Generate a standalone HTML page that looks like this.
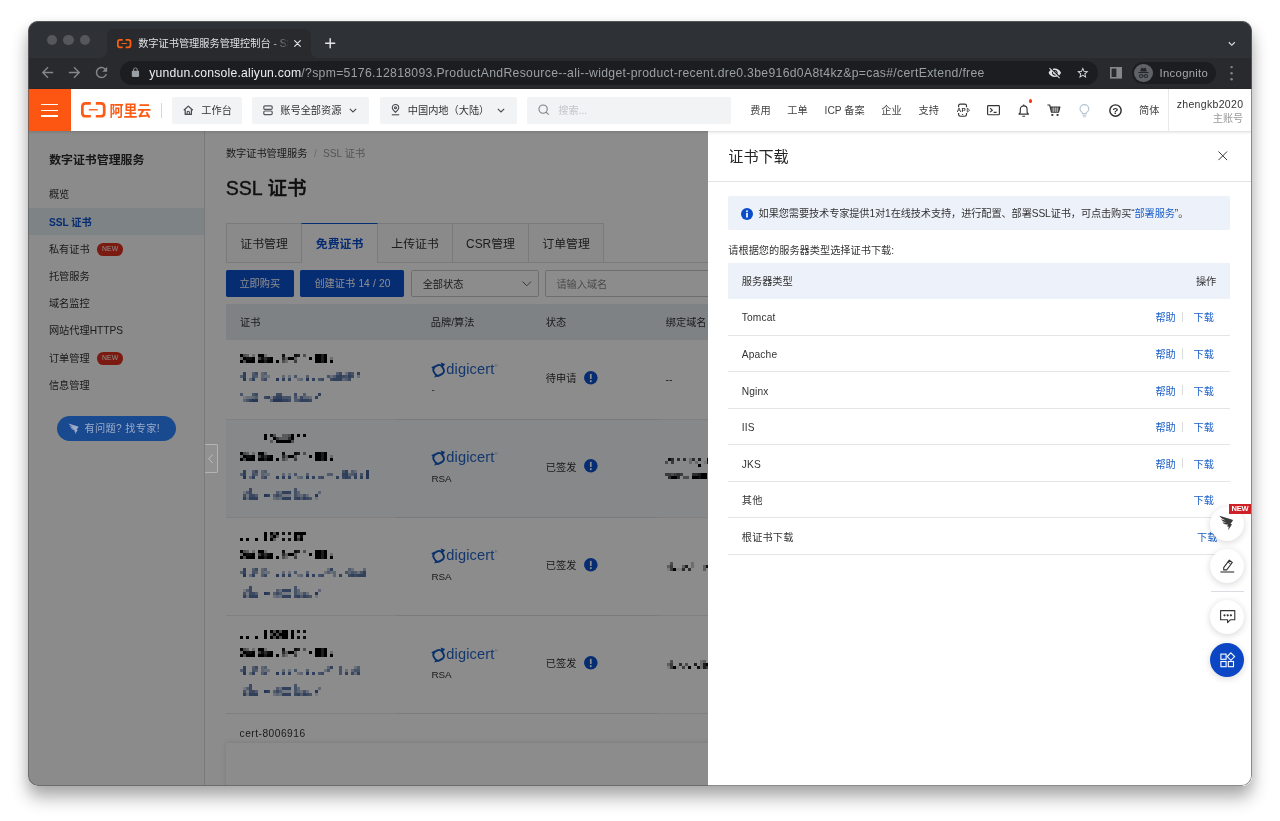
<!DOCTYPE html>
<html lang="zh-CN">
<head>
<meta charset="utf-8">
<title>数字证书管理服务管理控制台 - SSL 证书</title>
<style>
*{box-sizing:border-box;margin:0;padding:0}
html,body{width:1280px;height:821px;overflow:hidden;background:#fff}
body{font-family:"Liberation Sans","Noto Sans CJK SC",sans-serif;font-size:10.2px;color:#333;position:relative;-webkit-font-smoothing:antialiased}
.a{position:absolute}
.t{position:absolute;white-space:nowrap;line-height:14px;height:14px;margin-top:1.2px}
#url,#user,#dtitle,#inc{margin-top:0}#h1{margin-top:.5px}#info{margin-top:.6px}#ttl{margin-top:.8px}
svg{position:absolute;overflow:visible}
#win{position:absolute;left:28.4px;top:21px;width:1223.6px;height:764.6px;border-radius:10px;overflow:hidden;background:transparent;will-change:transform}
#shadow{position:absolute;left:28.4px;top:21px;width:1223.6px;height:764.6px;border-radius:10px;box-shadow:0 12px 17px rgba(0,0,0,.30),0 3px 12px rgba(0,0,0,.09)}
#ring{position:absolute;left:0;top:0;width:100%;height:100%;border-radius:10px;box-shadow:inset 0 0 0 1px rgba(98,98,98,.74);z-index:20;pointer-events:none}
/* chrome */
#tabstrip{left:0;top:0;width:100%;height:36.8px;background:#2e3135}
#toolbar{left:0;top:36.8px;width:100%;height:30.8px;background:#292a2e}
.tl{position:absolute;top:14.1px;width:10.3px;height:10.3px;border-radius:50%;background:#55575b}
#tab{left:79.3px;top:8.1px;width:203.5px;height:28.8px;background:#292a2e;border-radius:7px 7px 0 0}
#tab:before,#tab:after{content:"";position:absolute;bottom:0;width:7px;height:7px;background:radial-gradient(circle at 0 0,rgba(0,0,0,0) 6.6px,#292a2e 7px)}
#tab:before{left:-7px}
#tab:after{right:-7px;background:radial-gradient(circle at 100% 0,rgba(0,0,0,0) 6.6px,#292a2e 7px)}
#omni{left:92.1px;top:39.8px;width:977.8px;height:24.5px;border-radius:12.3px;background:#1c1d20}
#incog{left:1104.4px;top:40.5px;width:83.6px;height:22.6px;border-radius:11.3px;background:#1c1d20}
/* aliyun header */
#hdr{left:0;top:67.6px;width:100%;height:42.5px;background:#fff;box-shadow:0 1px 3px rgba(0,0,0,.16);z-index:5}
.hb{position:absolute;top:8.2px;height:27px;background:#f1f3f5;border-radius:1.7px}
.nav{position:absolute;top:15.5px;line-height:14px;white-space:nowrap;color:#444}
/* page */
#page{left:0;top:110.1px;width:100%;height:654.5px;background:#fff}
#side{left:0;top:0;width:177.2px;height:100%;background:#fdfdfd;border-right:.85px solid #dcdcdc}
.si{position:absolute;left:0;width:176.4px;height:27.2px;line-height:27.2px;padding-top:.9px;padding-left:20.9px;color:#333;white-space:nowrap}
.new{display:inline-block;vertical-align:1.4px;margin-left:7.2px;width:26.6px;height:12.6px;line-height:12.6px;border-radius:6.3px;background:#e0301e;color:#fff;font-size:6.8px;text-align:center;letter-spacing:.2px}
#overlay{left:0;top:0;width:679.8px;height:100%;background:rgba(0,0,0,.45);z-index:3}
#drawer{left:679.8px;top:0;width:543.8px;height:100%;background:#fff;z-index:4}
.lnk{color:#1a5fc8}
.btn{top:138.6px;height:27.2px;line-height:28.6px;background:#0b50d0;color:#fff;text-align:center;border-radius:1.7px;white-space:nowrap}
.inp{top:138.6px;height:27.2px;line-height:27.2px;border:.85px solid #c6c8cc;border-radius:1.7px;background:#fff;padding-left:10.4px;white-space:nowrap}
</style>
</head>
<body>
<div id="shadow"></div>
<div id="win">
<div class="a" id="tabstrip">
  <div class="tl" style="left:18.5px"></div><div class="tl" style="left:35.3px"></div><div class="tl" style="left:52.1px"></div>
  <div class="a" id="tab">
    <svg style="left:10.2px;top:9.700px" width="14.400" height="9.200" viewBox="0 0 24.600 15.600" fill="none" stroke="#f8600f"><path d="M9.800 1.500H4.900Q1.500 1.500 1.500 4.900V10.700Q1.500 14.100 4.900 14.100H9.800M14.800 1.500H19.700Q23.100 1.500 23.100 4.900V10.700Q23.100 14.100 19.700 14.100H14.800" stroke-width="3"/><path d="M7.800 7.800H16.800" stroke-width="1.800"/></svg>
    <div class="t" id="ttl" style="left:30.9px;top:7.2px;width:150px;overflow:hidden;color:#dfe1e5;-webkit-mask-image:linear-gradient(90deg,#000 132px,rgba(0,0,0,.15) 149px);mask-image:linear-gradient(90deg,#000 132px,rgba(0,0,0,.15) 149px)">数字证书管理服务管理控制台 - SSL 证书</div>
    <svg style="left:187.2px;top:10.7px" width="7" height="7" viewBox="0 0 10 10" stroke="#e3e5e8" stroke-width="1.7" stroke-linecap="round"><path d="M1 1L9 9M9 1L1 9"/></svg>
  </div>
  <svg style="left:296.5px;top:17px" width="10.4" height="10.4" viewBox="0 0 12 12" stroke="#e3e5e8" stroke-width="1.7" stroke-linecap="round"><path d="M6 .8V11.2M.8 6H11.2"/></svg>
  <svg style="left:1196.8px;top:15.7px" width="13.6" height="13.6" viewBox="0 0 24 24" fill="#dfe1e5"><path d="M7.41 8.59L12 13.17l4.59-4.58L18 10l-6 6-6-6 1.41-1.41z"/></svg>
</div>
<div class="a" id="toolbar">
  <svg style="left:10.5px;top:6.7px" width="17" height="17" viewBox="0 0 24 24" fill="#84878c"><path d="M20 11H7.83l5.59-5.59L12 4l-8 8 8 8 1.41-1.41L7.83 13H20v-2z"/></svg>
  <svg style="left:38px;top:6.7px" width="17" height="17" viewBox="0 0 24 24" fill="#84878c"><path d="M12 4l-1.41 1.41L16.17 11H4v2h12.17l-5.58 5.59L12 20l8-8z"/></svg>
  <svg style="left:65.1px;top:6.7px" width="17" height="17" viewBox="0 0 24 24" fill="#84878c"><path d="M17.65 6.35A7.958 7.958 0 0 0 12 4c-4.42 0-7.99 3.58-7.99 8s3.57 8 7.99 8c3.73 0 6.84-2.55 7.73-6h-2.08A5.99 5.99 0 0 1 12 18c-3.31 0-6-2.69-6-6s2.69-6 6-6c1.66 0 3.14.69 4.22 1.78L13 11h7V4l-2.35 2.350z"/></svg>
</div>
<div class="a" id="omni">
  <svg style="left:9.5px;top:6.4px" width="10.9" height="10.9" viewBox="0 0 24 24" fill="#9aa0a6"><path d="M18 8h-1V6c0-2.76-2.240-5-5-5S7 3.240 7 6v2H6c-1.100 0-2 .9-2 2v10c0 1.100.9 2 2 2h12c1.100 0 2-.9 2-2V10c0-1.100-.9-2-2-2zM9 6c0-1.660 1.340-3 3-3s3 1.340 3 3v2H9V6z"/></svg>
  <div class="t" id="url" style="left:29.2px;top:4.9px;font-size:12.2px;letter-spacing:.334px;color:#9aa0a6"><span style="color:#eceef1;letter-spacing:.2px">yundun.console.aliyun.com</span>/?spm=5176.12818093.ProductAndResource--ali--widget-product-recent.dre0.3be916d0A8t4kz&amp;p=cas#/certExtend/free</div>
  <svg style="left:928.2px;top:5.4px" width="13.6" height="13.6" viewBox="0 0 24 24" fill="#dfe1e5"><path d="M12 7c2.760 0 5 2.240 5 5 0 .650-.130 1.260-.360 1.830l2.920 2.920c1.510-1.260 2.700-2.890 3.430-4.750-1.730-4.390-6-7.500-11-7.500-1.400 0-2.740.250-3.980.7l2.160 2.160C10.740 7.130 11.350 7 12 7zM2 4.270l2.280 2.280.46.460C3.080 8.300 1.780 10.020 1 12c1.730 4.390 6 7.500 11 7.500 1.550 0 3.030-.3 4.380-.840l.42.420L19.730 22 21 20.730 3.270 3 2 4.270zM7.530 9.800l1.550 1.550c-.050.210-.080.430-.080.650 0 1.660 1.340 3 3 3 .220 0 .440-.030.650-.080l1.550 1.550c-.670.330-1.410.530-2.200.530-2.760 0-5-2.240-5-5 0-.790.200-1.530.530-2.200zm4.310-.780l3.150 3.150.020-.160c0-1.660-1.340-3-3-3l-.170.010z"/></svg>
  <svg style="left:955.5px;top:5.4px" width="13.6" height="13.6" viewBox="0 0 24 24" fill="#dfe1e5"><path d="M22 9.240l-7.190-.620L12 2 9.190 8.630 2 9.240l5.460 4.730L5.820 21 12 17.270 18.180 21l-1.630-7.030L22 9.240zM12 15.400l-3.760 2.270 1-4.280-3.320-2.880 4.380-.380L12 6.100l1.710 4.040 4.380.380-3.320 2.880 1 4.280L12 15.400z"/></svg>
</div>
<svg style="left:1082.1px;top:46.300px" width="12" height="11.6" viewBox="0 0 12 11.6"><rect x=".8" y=".8" width="10.4" height="10" fill="none" stroke="#84878c" stroke-width="1.6"/><rect x="6.400" y=".8" width="4.800" height="10" fill="#84878c"/></svg>
<div class="a" id="incog">
  <div class="a" style="left:2px;top:2px;width:18.600px;height:18.600px;border-radius:50%;background:#5f6368"></div>
  <svg style="left:4.800px;top:5.200px" width="13" height="12" viewBox="0 0 26 24" fill="#24262a"><path d="M8.200 2.500Q8.700 1 10 1.600L13 3 16 1.600Q17.300 1 17.800 2.500L19.600 9H6.400Z"/><rect x="2.500" y="10.200" width="21" height="1.900" rx=".9"/><path d="M8 14a4 4 0 1 0 0 8 4 4 0 0 0 0-8zm0 1.800a2.200 2.200 0 1 1 0 4.400 2.200 2.200 0 0 1 0-4.400zM18 14a4 4 0 1 0 0 8 4 4 0 0 0 0-8zm0 1.800a2.200 2.200 0 1 1 0 4.400 2.200 2.200 0 0 1 0-4.400z"/><path d="M11.200 17.200Q13 16 14.800 17.200V18.900Q13 17.700 11.200 18.900Z"/></svg>
  <div class="t" id="inc" style="left:27.200px;top:4.300px;font-size:11.3px;letter-spacing:.3px;color:#a3a7ac">Incognito</div>
</div>
<svg style="left:1202.4px;top:43.800px" width="3.200" height="16.400" viewBox="0 0 3.200 16.400" fill="#84878c"><circle cx="1.600" cy="2.100" r="1.200"/><circle cx="1.600" cy="8.200" r="1.200"/><circle cx="1.600" cy="14.300" r="1.200"/></svg>

<div class="a" id="hdr">
  <div class="a" style="left:0;top:0;width:42.7px;height:42.5px;background:#fd5512"></div>
  <div class="a" style="left:13px;top:15px;width:17.2px;height:1.45px;background:#fff"></div>
  <div class="a" style="left:13px;top:20.95px;width:17.2px;height:1.45px;background:#fff"></div>
  <div class="a" style="left:13px;top:26.85px;width:17.2px;height:1.45px;background:#fff"></div>
  <svg style="left:52.7px;top:13.8px" width="24.6" height="15.6" viewBox="0 0 24.600 15.600" fill="none" stroke="#fd5a14"><path d="M9.800 1.350H4.700Q1.350 1.350 1.350 4.700V10.900Q1.350 14.250 4.700 14.250H9.800M14.800 1.350H19.900Q23.250 1.350 23.250 4.700V10.900Q23.250 14.250 19.900 14.250H14.800" stroke-width="2.700"/><path d="M7.800 7.800H16.800" stroke-width="1.350"/></svg>
  <div class="t" id="logo" style="left:81.6px;top:12.4px;height:18px;line-height:18px;font-size:13.9px;font-weight:700;color:#fd5a14;letter-spacing:-.1px;transform:scaleY(1.06)">阿里云</div>
  <div class="a" style="left:133.4px;top:14.2px;width:.9px;height:15px;background:#d4d6d8"></div>

  <div class="hb" style="left:144.1px;width:69.5px"></div>
  <svg style="left:155.3px;top:16.1px" width="10.6" height="10.6" viewBox="0 0 12 12" fill="none" stroke="#4a4d50" stroke-width="1.45" stroke-linejoin="round"><path d="M.9 5.900L6 1.300 11.100 5.900"/><path d="M2.500 5V10.700H9.500V5" /><path d="M4.700 10.700V8.200Q4.700 7 6 7T7.300 8.200V10.700" stroke-width="1.200"/></svg>
  <div class="nav" style="left:173.300px;color:#333">工作台</div>

  <div class="hb" style="left:224.1px;width:117px"></div>
  <svg style="left:235.3px;top:16.400px" width="10" height="10.400" viewBox="0 0 10 10.400" fill="none" stroke="#55585c" stroke-width="1.200"><rect x=".8" y=".8" width="8.400" height="3.600" rx="1.200"/><rect x=".8" y="6" width="8.400" height="3.600" rx="1.200"/></svg>
  <div class="nav" style="left:252.300px;color:#333">账号全部资源</div>
  <svg style="left:321.4px;top:19px" width="8" height="5" viewBox="0 0 8 5" fill="none" stroke="#4a4a4a" stroke-width="1.100"><path d="M.8 .8L4 4 7.200 .8"/></svg>

  <div class="hb" style="left:351.6px;width:137px"></div>
  <svg style="left:363.4px;top:15.700px" width="9" height="11.600" viewBox="0 0 9 11.600" fill="none" stroke="#4a4d50" stroke-width="1.100"><path d="M4.500 8.300C2.500 6.400 1.300 5.200 1.300 3.700a3.200 3.200 0 0 1 6.400 0C7.700 5.200 6.500 6.400 4.500 8.300z"/><circle cx="4.500" cy="3.700" r="1"/><path d="M.8 10.800H8.200"/></svg>
  <div class="nav" style="left:379.800px;color:#333">中国内地（大陆）</div>
  <svg style="left:468.9px;top:19px" width="8" height="5" viewBox="0 0 8 5" fill="none" stroke="#4a4a4a" stroke-width="1.100"><path d="M.8 .8L4 4 7.200 .8"/></svg>

  <div class="hb" style="left:499.1px;width:203.8px"></div>
  <svg style="left:509.6px;top:15.800px" width="11.600" height="11.600" viewBox="0 0 12 12" fill="none" stroke="#7d8185" stroke-width="1.150"><circle cx="5.300" cy="5.300" r="4.300"/><path d="M8.400 8.400L11 11"/></svg>
  <div class="nav" style="left:530.300px;color:#c2c5c9">搜索...</div>

  <div class="nav" style="left:722.300px">费用</div>
  <div class="nav" style="left:759.300px">工单</div>
  <div class="nav" style="left:796.600px">ICP 备案</div>
  <div class="nav" style="left:853.300px">企业</div>
  <div class="nav" style="left:890.600px">支持</div>

  <!-- api -->
  <svg style="left:926.6px;top:14.600px" width="15.600" height="14.400" viewBox="0 0 15.600 14.400" fill="none" stroke="#333" stroke-width="1.150"><path d="M3.600 4.300V2.800Q3.600 1.100 5.300 1.100H9.800Q11.500 1.100 11.500 2.800V4.300M3.600 10.100V11.600Q3.600 13.300 5.300 13.300H9.800Q11.500 13.300 11.500 11.600V10.100"/><path d="M6.900 11.600H8.200" stroke-width=".9"/><text x="6.400" y="9.400" font-family="Liberation Sans,sans-serif" font-size="6.200" font-weight="700" text-anchor="middle" fill="#333" stroke="none" letter-spacing=".3">AP</text><path d="M12.300 5.200L14.600 7.200 12.300 9.200Z" stroke-width=".8" stroke-linejoin="round"/></svg>
  <!-- terminal -->
  <svg style="left:958.6px;top:16.200px" width="13" height="10.400" viewBox="0 0 13 10.400" fill="none" stroke="#333" stroke-width="1.150"><rect x=".6" y=".6" width="11.800" height="9.200" rx=".8"/><path d="M3.100 3.200L5.300 5.200 3.100 7.200M6.600 7.400H9.600"/></svg>
  <!-- bell -->
  <svg style="left:989.9px;top:15.200px" width="11.400" height="13.400" viewBox="0 0 11.400 13.400" fill="none" stroke="#333" stroke-width="1.150"><path d="M1 10.200H10.400L9.100 8.400V5.300A3.400 3.400 0 0 0 2.300 5.300V8.400Z" stroke-linejoin="round"/><path d="M5.700 1.900V.6M4.300 12.300H7.100"/></svg>
  <div class="a" style="left:1000.6px;top:10.500px;width:3.500px;height:3.500px;border-radius:50%;background:#f5371e"></div>
  <!-- cart -->
  <svg style="left:1019.2px;top:15.500px" width="13.800" height="12.400" viewBox="0 0 13.800 12.400" fill="none" stroke="#333" stroke-width="1.150"><path d="M3.400 3.200H12.900L11.600 8.100H4.600Z" fill="#6a6a6a" stroke="none"/><path d="M.4 1H2.700L4.500 8.300H11.500L12.900 3.100H3.300" stroke-linejoin="round"/><path d="M6.300 3.400V8M8.300 3.400V8M10.300 3.400V8" stroke="#fff" stroke-width=".55"/><rect x="4.400" y="10" width="1.900" height="1.900" fill="#333" stroke="none"/><rect x="9.600" y="10" width="1.900" height="1.900" fill="#333" stroke="none"/></svg>
  <!-- bulb -->
  <svg style="left:1051.2px;top:15px" width="10.800" height="14" viewBox="0 0 10.800 14" fill="none" stroke="#b6c5d1" stroke-width="1.150"><path d="M3.500 9.700V8.900C2.200 8 1 6.800 1 5a4.400 4.400 0 0 1 8.800 0C9.800 6.800 8.600 8 7.300 8.900V9.700Z" stroke-linejoin="round"/><path d="M3.600 11.300H7.200M3.900 12.800H6.900" stroke-width=".9"/></svg>
  <!-- help -->
  <svg style="left:1081.1px;top:15.400px" width="13" height="13" viewBox="0 0 13 13"><circle cx="6.500" cy="6.500" r="5.650" fill="none" stroke="#2e2e2e" stroke-width="1.450"/><text x="6.500" y="9.900" font-family="Liberation Sans,sans-serif" font-size="9.600" font-weight="700" text-anchor="middle" fill="#2e2e2e">?</text></svg>
  <div class="nav" style="left:1111.1px">简体</div>
  <div class="a" style="left:1139.7px;top:0;width:.85px;height:42.500px;background:#e6e8ea"></div>
  <div class="t" style="right:8.3px;top:8.100px;font-size:10.500px;color:#333;letter-spacing:.32px" id="user">zhengkb2020</div>
  <div class="t" style="right:8.3px;top:21.900px;color:#9a9a9a">主账号</div>
</div>

<div class="a" id="page">
<div class="a" id="side">
<div class="t" style="left:21.2px;top:19.6px;height:16px;line-height:16px;font-size:11.9px;font-weight:700;color:#2b2b2b">数字证书管理服务</div>
<div class="si" style="top:49.5px;">概览</div>
<div class="si" style="top:76.7px;background:#e6eef4;color:#0b50d0;font-weight:700;">SSL 证书</div>
<div class="si" style="top:103.9px;">私有证书<span class=new>NEW</span></div>
<div class="si" style="top:131.1px;">托管服务</div>
<div class="si" style="top:158.3px;">域名监控</div>
<div class="si" style="top:185.5px;">网站代理HTTPS</div>
<div class="si" style="top:212.7px;">订单管理<span class=new>NEW</span></div>
<div class="si" style="top:239.9px;">信息管理</div>
</div>
<div class="a" id="main" style="left:177.2px;top:0;width:1046.4px;height:100%;background:#fff;overflow:hidden">
<div class="t" style="left:20.7px;top:14.3px;color:#333">数字证书管理服务<span style="color:#c4c4c4;margin:0 6.2px 0 6.6px">/</span><span style="color:#9c9c9c">SSL 证书</span></div>
<div class="t" id="h1" style="left:20.5px;top:42.9px;height:28px;line-height:28px;font-size:19.6px;font-weight:500;color:#1c1c1c;-webkit-text-stroke:.35px #1c1c1c">SSL 证书</div>
<div class="a" style="left:20.7px;top:131px;width:900px;height:.85px;background:#dedede"></div>
<div class="a" style="left:20.7px;top:92.2px;width:76.3px;height:39.6px;background:#fbfbfb;border:.85px solid #dedede;text-align:center;line-height:40.1px;font-size:11.9px;color:#333">证书管理</div>
<div class="a" style="left:96.2px;top:92.2px;width:76.3px;height:39.8px;background:#fff;border:.85px solid #dedede;border-bottom:none;border-top:1.7px solid #0b50d0;text-align:center;line-height:40.6px;font-size:11.9px;font-weight:700;color:#0b50d0;z-index:2">免费证书</div>
<div class="a" style="left:171.7px;top:92.2px;width:76.3px;height:39.6px;background:#fbfbfb;border:.85px solid #dedede;text-align:center;line-height:40.1px;font-size:11.9px;color:#333">上传证书</div>
<div class="a" style="left:247.2px;top:92.2px;width:76.3px;height:39.6px;background:#fbfbfb;border:.85px solid #dedede;text-align:center;line-height:40.1px;font-size:11.9px;color:#333">CSR管理</div>
<div class="a" style="left:322.7px;top:92.2px;width:76.3px;height:39.6px;background:#fbfbfb;border:.85px solid #dedede;text-align:center;line-height:40.1px;font-size:11.9px;color:#333">订单管理</div>
<div class="a btn" style="left:20.7px;width:67.9px">立即购买</div>
<div class="a btn" style="left:95.2px;width:104px;word-spacing:.4px">创建证书 14 / 20</div>
<div class="a inp" style="left:206.1px;width:127.5px;color:#333">全部状态<svg style="left:109.6px;top:10.2px" width="9.6" height="5.6" viewBox="0 0 9.6 5.6" fill="none" stroke="#555" stroke-width=".9"><path d="M.6 .6L4.800 4.800 9 .6"/></svg></div>
<div class="a inp" style="left:339.8px;width:260px;color:#8a8a8a">请输入域名</div>
<div class="a" style="left:20.7px;top:172.7px;width:900px;height:36.2px;background:#e7edf3"></div>
<div class="t" style="left:34.8px;top:183.7px;color:#333">证书</div>
<div class="t" style="left:225.6px;top:183.7px;color:#333">品牌/算法</div>
<div class="t" style="left:340.6px;top:183.7px;color:#333">状态</div>
<div class="t" style="left:460.6px;top:183.7px;color:#333">绑定域名</div>
<div class="a" style="left:20.7px;top:288.4px;width:900px;height:97.7px;background:#f4f7fa"></div>
<div class="a" style="left:20.7px;top:287.95px;width:900px;height:.85px;background:#e9eaec"></div>
<div class="a" style="left:191.7px;top:287.95px;width:261px;height:.85px;background:#dcdee1"></div>
<div class="a" style="left:20.7px;top:385.65px;width:900px;height:.85px;background:#e9eaec"></div>
<div class="a" style="left:191.7px;top:385.65px;width:261px;height:.85px;background:#dcdee1"></div>
<div class="a" style="left:20.7px;top:483.45px;width:900px;height:.85px;background:#e9eaec"></div>
<div class="a" style="left:191.7px;top:483.45px;width:261px;height:.85px;background:#dcdee1"></div>
<div class="a" style="left:20.7px;top:581.45px;width:900px;height:.85px;background:#e9eaec"></div>
<div class="a" style="left:191.7px;top:581.45px;width:261px;height:.85px;background:#dcdee1"></div>
<svg style="left:35.2px;top:223.1px" width="93.0" height="8.9" fill="#000" shape-rendering="crispEdges"><path opacity="0.22" d="M12 0h3v2.95h-3zM24 0h3v2.95h-3zM0 2.95h3v2.95h-3zM90 2.95h3v2.95h-3zM45 5.9h3v2.95h-3z"/><path opacity="0.33" d="M6 0h3v2.95h-3zM45 2.95h3v2.95h-3zM54 2.95h3v2.95h-3z"/><path opacity="0.44" d="M3 0h3v2.95h-3zM63 0h3v2.95h-3zM3 5.9h3v2.95h-3zM42 5.9h3v2.95h-3z"/><path opacity="0.56" d="M18 2.95h3v2.95h-3zM54 5.9h3v2.95h-3z"/><path opacity="0.67" d="M24 2.95h3v2.95h-3zM42 2.95h3v2.95h-3z"/><path opacity="0.78" d="M57 0h3v2.95h-3zM81 0h3v2.95h-3zM81 2.95h3v2.95h-3zM24 5.9h3v2.95h-3zM81 5.9h3v2.95h-3z"/><path opacity="0.89" d="M42 0h3v2.95h-3zM54 0h3v2.95h-3zM6 2.95h3v2.95h-3zM9 2.95h3v2.95h-3zM21 2.95h3v2.95h-3zM27 2.95h3v2.95h-3z"/><path opacity="1.00" d="M0 0h3v2.95h-3zM18 0h3v2.95h-3zM21 0h3v2.95h-3zM75 0h3v2.95h-3zM78 0h3v2.95h-3zM84 0h3v2.95h-3zM3 2.95h3v2.95h-3zM12 2.95h3v2.95h-3zM30 2.95h3v2.95h-3zM48 2.95h3v2.95h-3zM51 2.95h3v2.95h-3zM69 2.95h3v2.95h-3zM75 2.95h3v2.95h-3zM78 2.95h3v2.95h-3zM84 2.95h3v2.95h-3zM0 5.9h3v2.95h-3zM6 5.9h3v2.95h-3zM9 5.9h3v2.95h-3zM12 5.9h3v2.95h-3zM18 5.9h3v2.95h-3zM21 5.9h3v2.95h-3zM27 5.9h3v2.95h-3zM30 5.9h3v2.95h-3zM36 5.9h3v2.95h-3zM75 5.9h3v2.95h-3zM78 5.9h3v2.95h-3zM84 5.9h3v2.95h-3zM90 5.9h3v2.95h-3z"/></svg>
<svg style="left:35.2px;top:241.2px" width="120.0" height="8.9" fill="#45649b" shape-rendering="crispEdges"><path opacity="0.33" d="M105 0h3v2.95h-3zM24 2.95h3v2.95h-3zM27 2.95h3v2.95h-3zM48 2.95h3v2.95h-3zM90 2.95h3v2.95h-3zM117 2.95h3v2.95h-3zM57 5.9h3v2.95h-3z"/><path opacity="0.44" d="M21 0h3v2.95h-3zM21 2.95h3v2.95h-3zM42 2.95h3v2.95h-3zM9 5.9h3v2.95h-3zM60 5.9h3v2.95h-3zM102 5.9h3v2.95h-3z"/><path opacity="0.56" d="M12 0h3v2.95h-3zM24 0h3v2.95h-3zM96 0h3v2.95h-3zM0 2.95h3v2.95h-3zM15 2.95h3v2.95h-3zM66 2.95h3v2.95h-3zM93 2.95h3v2.95h-3zM21 5.9h3v2.95h-3zM105 5.9h3v2.95h-3z"/><path opacity="0.67" d="M111 0h3v2.95h-3zM12 2.95h3v2.95h-3zM54 2.95h3v2.95h-3zM87 2.95h3v2.95h-3zM105 2.95h3v2.95h-3zM78 5.9h3v2.95h-3z"/><path opacity="0.78" d="M15 0h3v2.95h-3zM99 0h3v2.95h-3zM108 0h3v2.95h-3zM102 2.95h3v2.95h-3zM111 2.95h3v2.95h-3zM24 5.9h3v2.95h-3zM81 5.9h3v2.95h-3zM90 5.9h3v2.95h-3zM108 5.9h3v2.95h-3z"/><path opacity="0.89" d="M3 0h3v2.95h-3zM117 0h3v2.95h-3zM3 2.95h3v2.95h-3zM96 2.95h3v2.95h-3zM99 2.95h3v2.95h-3zM108 2.95h3v2.95h-3zM12 5.9h3v2.95h-3zM42 5.9h3v2.95h-3zM48 5.9h3v2.95h-3zM72 5.9h3v2.95h-3zM93 5.9h3v2.95h-3zM96 5.9h3v2.95h-3zM99 5.9h3v2.95h-3z"/><path opacity="1.00" d="M3 5.9h3v2.95h-3zM36 5.9h3v2.95h-3zM66 5.9h3v2.95h-3z"/></svg>
<svg style="left:35.2px;top:262.0px" width="81.0" height="8.9" fill="#45649b" shape-rendering="crispEdges"><path opacity="0.22" d="M3 2.95h3v2.95h-3zM30 2.95h3v2.95h-3zM57 2.95h3v2.95h-3z"/><path opacity="0.33" d="M6 2.95h3v2.95h-3zM9 2.95h3v2.95h-3zM69 2.95h3v2.95h-3z"/><path opacity="0.44" d="M12 2.95h3v2.95h-3zM63 2.95h3v2.95h-3zM66 2.95h3v2.95h-3zM3 5.9h3v2.95h-3z"/><path opacity="0.56" d="M63 0h3v2.95h-3zM15 2.95h3v2.95h-3zM30 5.9h3v2.95h-3zM54 5.9h3v2.95h-3z"/><path opacity="0.67" d="M0 0h3v2.95h-3zM12 0h3v2.95h-3zM42 2.95h3v2.95h-3zM45 2.95h3v2.95h-3zM48 2.95h3v2.95h-3zM54 2.95h3v2.95h-3zM6 5.9h3v2.95h-3zM57 5.9h3v2.95h-3z"/><path opacity="0.78" d="M15 0h3v2.95h-3zM36 0h3v2.95h-3zM39 0h3v2.95h-3zM54 0h3v2.95h-3zM24 2.95h3v2.95h-3zM33 2.95h3v2.95h-3zM60 2.95h3v2.95h-3zM48 5.9h3v2.95h-3zM69 5.9h3v2.95h-3z"/><path opacity="0.89" d="M78 0h3v2.95h-3zM27 2.95h3v2.95h-3zM36 2.95h3v2.95h-3zM39 2.95h3v2.95h-3zM75 2.95h3v2.95h-3zM9 5.9h3v2.95h-3zM42 5.9h3v2.95h-3zM45 5.9h3v2.95h-3zM60 5.9h3v2.95h-3zM63 5.9h3v2.95h-3zM66 5.9h3v2.95h-3z"/><path opacity="1.00" d="M12 5.9h3v2.95h-3zM15 5.9h3v2.95h-3zM33 5.9h3v2.95h-3zM36 5.9h3v2.95h-3zM39 5.9h3v2.95h-3z"/></svg>
<svg style="left:58.7px;top:303.4px" width="42.0" height="8.9" fill="#000" shape-rendering="crispEdges"><path opacity="0.33" d="M18 0h3v2.95h-3zM21 0h3v2.95h-3zM15 2.95h3v2.95h-3zM18 2.95h3v2.95h-3zM21 2.95h3v2.95h-3zM6 5.9h3v2.95h-3z"/><path opacity="0.44" d="M9 0h3v2.95h-3zM24 0h3v2.95h-3zM27 5.9h3v2.95h-3z"/><path opacity="0.56" d="M12 2.95h3v2.95h-3z"/><path opacity="0.67" d="M24 2.95h3v2.95h-3z"/><path opacity="0.89" d="M6 0h3v2.95h-3z"/><path opacity="1.00" d="M0 0h3v2.95h-3zM27 0h3v2.95h-3zM33 0h3v2.95h-3zM39 0h3v2.95h-3zM0 2.95h3v2.95h-3zM9 2.95h3v2.95h-3zM27 2.95h3v2.95h-3zM12 5.9h3v2.95h-3zM15 5.9h3v2.95h-3zM18 5.9h3v2.95h-3zM21 5.9h3v2.95h-3zM24 5.9h3v2.95h-3z"/></svg>
<svg style="left:35.2px;top:321.2px" width="93.0" height="8.9" fill="#000" shape-rendering="crispEdges"><path opacity="0.22" d="M12 0h3v2.95h-3zM24 0h3v2.95h-3zM0 2.95h3v2.95h-3zM90 2.95h3v2.95h-3zM45 5.9h3v2.95h-3z"/><path opacity="0.33" d="M6 0h3v2.95h-3zM45 2.95h3v2.95h-3zM54 2.95h3v2.95h-3z"/><path opacity="0.44" d="M3 0h3v2.95h-3zM63 0h3v2.95h-3zM3 5.9h3v2.95h-3zM42 5.9h3v2.95h-3z"/><path opacity="0.56" d="M18 2.95h3v2.95h-3zM54 5.9h3v2.95h-3z"/><path opacity="0.67" d="M24 2.95h3v2.95h-3zM42 2.95h3v2.95h-3z"/><path opacity="0.78" d="M57 0h3v2.95h-3zM81 0h3v2.95h-3zM81 2.95h3v2.95h-3zM24 5.9h3v2.95h-3zM81 5.9h3v2.95h-3z"/><path opacity="0.89" d="M42 0h3v2.95h-3zM54 0h3v2.95h-3zM6 2.95h3v2.95h-3zM9 2.95h3v2.95h-3zM21 2.95h3v2.95h-3zM27 2.95h3v2.95h-3z"/><path opacity="1.00" d="M0 0h3v2.95h-3zM18 0h3v2.95h-3zM21 0h3v2.95h-3zM75 0h3v2.95h-3zM78 0h3v2.95h-3zM84 0h3v2.95h-3zM3 2.95h3v2.95h-3zM12 2.95h3v2.95h-3zM30 2.95h3v2.95h-3zM48 2.95h3v2.95h-3zM51 2.95h3v2.95h-3zM69 2.95h3v2.95h-3zM75 2.95h3v2.95h-3zM78 2.95h3v2.95h-3zM84 2.95h3v2.95h-3zM0 5.9h3v2.95h-3zM6 5.9h3v2.95h-3zM9 5.9h3v2.95h-3zM12 5.9h3v2.95h-3zM18 5.9h3v2.95h-3zM21 5.9h3v2.95h-3zM27 5.9h3v2.95h-3zM30 5.9h3v2.95h-3zM36 5.9h3v2.95h-3zM75 5.9h3v2.95h-3zM78 5.9h3v2.95h-3zM84 5.9h3v2.95h-3zM90 5.9h3v2.95h-3z"/></svg>
<svg style="left:35.2px;top:339.1px" width="129.0" height="8.9" fill="#45649b" shape-rendering="crispEdges"><path opacity="0.33" d="M114 0h3v2.95h-3zM24 2.95h3v2.95h-3zM27 2.95h3v2.95h-3zM48 2.95h3v2.95h-3zM57 5.9h3v2.95h-3z"/><path opacity="0.44" d="M21 0h3v2.95h-3zM21 2.95h3v2.95h-3zM42 2.95h3v2.95h-3zM108 2.95h3v2.95h-3zM9 5.9h3v2.95h-3zM60 5.9h3v2.95h-3z"/><path opacity="0.56" d="M12 0h3v2.95h-3zM24 0h3v2.95h-3zM111 0h3v2.95h-3zM0 2.95h3v2.95h-3zM15 2.95h3v2.95h-3zM66 2.95h3v2.95h-3zM87 2.95h3v2.95h-3zM90 2.95h3v2.95h-3zM111 2.95h3v2.95h-3zM21 5.9h3v2.95h-3z"/><path opacity="0.67" d="M102 0h3v2.95h-3zM12 2.95h3v2.95h-3zM54 2.95h3v2.95h-3zM120 2.95h3v2.95h-3zM78 5.9h3v2.95h-3z"/><path opacity="0.78" d="M15 0h3v2.95h-3zM114 2.95h3v2.95h-3zM24 5.9h3v2.95h-3zM81 5.9h3v2.95h-3zM102 5.9h3v2.95h-3zM108 5.9h3v2.95h-3z"/><path opacity="0.89" d="M3 0h3v2.95h-3zM105 0h3v2.95h-3zM3 2.95h3v2.95h-3zM102 2.95h3v2.95h-3zM105 2.95h3v2.95h-3zM12 5.9h3v2.95h-3zM42 5.9h3v2.95h-3zM48 5.9h3v2.95h-3zM72 5.9h3v2.95h-3zM96 5.9h3v2.95h-3zM105 5.9h3v2.95h-3zM114 5.9h3v2.95h-3zM120 5.9h3v2.95h-3z"/><path opacity="1.00" d="M126 0h3v2.95h-3zM126 2.95h3v2.95h-3zM3 5.9h3v2.95h-3zM36 5.9h3v2.95h-3zM66 5.9h3v2.95h-3zM126 5.9h3v2.95h-3z"/></svg>
<svg style="left:38.2px;top:356.8px" width="78.0" height="11.8" fill="#45649b" shape-rendering="crispEdges"><path opacity="0.22" d="M0 2.95h3v2.95h-3zM3 5.9h3v2.95h-3zM39 5.9h3v2.95h-3zM42 5.9h3v2.95h-3zM45 5.9h3v2.95h-3zM72 8.85h3v2.95h-3z"/><path opacity="0.33" d="M36 2.95h3v2.95h-3zM57 5.9h3v2.95h-3zM63 5.9h3v2.95h-3zM3 8.85h3v2.95h-3zM30 8.85h3v2.95h-3zM36 8.85h3v2.95h-3z"/><path opacity="0.44" d="M54 2.95h3v2.95h-3zM75 2.95h3v2.95h-3zM54 5.9h3v2.95h-3zM33 8.85h3v2.95h-3z"/><path opacity="0.56" d="M3 2.95h3v2.95h-3zM33 2.95h3v2.95h-3zM12 5.9h3v2.95h-3zM30 5.9h3v2.95h-3zM36 5.9h3v2.95h-3zM57 8.85h3v2.95h-3z"/><path opacity="0.67" d="M51 0h3v2.95h-3zM51 2.95h3v2.95h-3zM0 5.9h3v2.95h-3zM51 5.9h3v2.95h-3zM60 5.9h3v2.95h-3zM66 8.85h3v2.95h-3z"/><path opacity="0.78" d="M6 0h3v2.95h-3zM6 2.95h3v2.95h-3zM6 5.9h3v2.95h-3zM9 5.9h3v2.95h-3zM33 5.9h3v2.95h-3zM51 8.85h3v2.95h-3zM63 8.85h3v2.95h-3z"/><path opacity="0.89" d="M39 2.95h3v2.95h-3zM42 2.95h3v2.95h-3zM45 2.95h3v2.95h-3zM24 5.9h3v2.95h-3zM0 8.85h3v2.95h-3zM6 8.85h3v2.95h-3zM9 8.85h3v2.95h-3zM12 8.85h3v2.95h-3zM39 8.85h3v2.95h-3zM42 8.85h3v2.95h-3zM45 8.85h3v2.95h-3zM54 8.85h3v2.95h-3zM60 8.85h3v2.95h-3z"/><path opacity="1.00" d="M21 5.9h3v2.95h-3zM72 5.9h3v2.95h-3z"/></svg>
<svg style="left:35.2px;top:401.4px" width="66.0" height="8.9" fill="#000" shape-rendering="crispEdges"><path opacity="0.33" d="M36 2.95h3v2.95h-3zM57 2.95h3v2.95h-3zM33 5.9h3v2.95h-3z"/><path opacity="0.44" d="M33 0h3v2.95h-3z"/><path opacity="0.56" d="M30 2.95h3v2.95h-3zM57 5.9h3v2.95h-3z"/><path opacity="0.89" d="M42 0h3v2.95h-3zM48 0h3v2.95h-3zM60 2.95h3v2.95h-3zM42 5.9h3v2.95h-3zM48 5.9h3v2.95h-3z"/><path opacity="1.00" d="M24 0h3v2.95h-3zM30 0h3v2.95h-3zM36 0h3v2.95h-3zM54 0h3v2.95h-3zM57 0h3v2.95h-3zM60 0h3v2.95h-3zM63 0h3v2.95h-3zM24 2.95h3v2.95h-3zM33 2.95h3v2.95h-3zM54 2.95h3v2.95h-3zM0 5.9h3v2.95h-3zM6 5.9h3v2.95h-3zM15 5.9h3v2.95h-3zM24 5.9h3v2.95h-3zM30 5.9h3v2.95h-3zM54 5.9h3v2.95h-3zM60 5.9h3v2.95h-3z"/></svg>
<svg style="left:35.2px;top:419.2px" width="93.0" height="8.9" fill="#000" shape-rendering="crispEdges"><path opacity="0.22" d="M12 0h3v2.95h-3zM24 0h3v2.95h-3zM0 2.95h3v2.95h-3zM90 2.95h3v2.95h-3zM45 5.9h3v2.95h-3z"/><path opacity="0.33" d="M6 0h3v2.95h-3zM45 2.95h3v2.95h-3zM54 2.95h3v2.95h-3z"/><path opacity="0.44" d="M3 0h3v2.95h-3zM63 0h3v2.95h-3zM3 5.9h3v2.95h-3zM42 5.9h3v2.95h-3z"/><path opacity="0.56" d="M18 2.95h3v2.95h-3zM54 5.9h3v2.95h-3z"/><path opacity="0.67" d="M24 2.95h3v2.95h-3zM42 2.95h3v2.95h-3z"/><path opacity="0.78" d="M57 0h3v2.95h-3zM81 0h3v2.95h-3zM81 2.95h3v2.95h-3zM24 5.9h3v2.95h-3zM81 5.9h3v2.95h-3z"/><path opacity="0.89" d="M42 0h3v2.95h-3zM54 0h3v2.95h-3zM6 2.95h3v2.95h-3zM9 2.95h3v2.95h-3zM21 2.95h3v2.95h-3zM27 2.95h3v2.95h-3z"/><path opacity="1.00" d="M0 0h3v2.95h-3zM18 0h3v2.95h-3zM21 0h3v2.95h-3zM75 0h3v2.95h-3zM78 0h3v2.95h-3zM84 0h3v2.95h-3zM3 2.95h3v2.95h-3zM12 2.95h3v2.95h-3zM30 2.95h3v2.95h-3zM48 2.95h3v2.95h-3zM51 2.95h3v2.95h-3zM69 2.95h3v2.95h-3zM75 2.95h3v2.95h-3zM78 2.95h3v2.95h-3zM84 2.95h3v2.95h-3zM0 5.9h3v2.95h-3zM6 5.9h3v2.95h-3zM9 5.9h3v2.95h-3zM12 5.9h3v2.95h-3zM18 5.9h3v2.95h-3zM21 5.9h3v2.95h-3zM27 5.9h3v2.95h-3zM30 5.9h3v2.95h-3zM36 5.9h3v2.95h-3zM75 5.9h3v2.95h-3zM78 5.9h3v2.95h-3zM84 5.9h3v2.95h-3zM90 5.9h3v2.95h-3z"/></svg>
<svg style="left:35.2px;top:437.1px" width="126.0" height="8.9" fill="#45649b" shape-rendering="crispEdges"><path opacity="0.33" d="M87 0h3v2.95h-3zM111 0h3v2.95h-3zM24 2.95h3v2.95h-3zM27 2.95h3v2.95h-3zM48 2.95h3v2.95h-3zM84 2.95h3v2.95h-3zM90 2.95h3v2.95h-3zM117 2.95h3v2.95h-3zM57 5.9h3v2.95h-3z"/><path opacity="0.44" d="M21 0h3v2.95h-3zM123 0h3v2.95h-3zM21 2.95h3v2.95h-3zM42 2.95h3v2.95h-3zM93 2.95h3v2.95h-3zM108 2.95h3v2.95h-3zM9 5.9h3v2.95h-3zM60 5.9h3v2.95h-3zM93 5.9h3v2.95h-3z"/><path opacity="0.56" d="M12 0h3v2.95h-3zM24 0h3v2.95h-3zM108 0h3v2.95h-3zM0 2.95h3v2.95h-3zM15 2.95h3v2.95h-3zM66 2.95h3v2.95h-3zM87 2.95h3v2.95h-3zM114 2.95h3v2.95h-3zM21 5.9h3v2.95h-3z"/><path opacity="0.67" d="M12 2.95h3v2.95h-3zM54 2.95h3v2.95h-3zM105 2.95h3v2.95h-3zM111 2.95h3v2.95h-3zM120 2.95h3v2.95h-3zM78 5.9h3v2.95h-3z"/><path opacity="0.78" d="M15 0h3v2.95h-3zM24 5.9h3v2.95h-3zM81 5.9h3v2.95h-3zM108 5.9h3v2.95h-3zM114 5.9h3v2.95h-3z"/><path opacity="0.89" d="M3 0h3v2.95h-3zM90 0h3v2.95h-3zM3 2.95h3v2.95h-3zM123 2.95h3v2.95h-3zM12 5.9h3v2.95h-3zM42 5.9h3v2.95h-3zM48 5.9h3v2.95h-3zM72 5.9h3v2.95h-3zM99 5.9h3v2.95h-3zM111 5.9h3v2.95h-3zM117 5.9h3v2.95h-3zM120 5.9h3v2.95h-3zM123 5.9h3v2.95h-3z"/><path opacity="1.00" d="M3 5.9h3v2.95h-3zM36 5.9h3v2.95h-3zM66 5.9h3v2.95h-3z"/></svg>
<svg style="left:38.2px;top:454.8px" width="78.0" height="11.8" fill="#45649b" shape-rendering="crispEdges"><path opacity="0.22" d="M0 2.95h3v2.95h-3zM3 5.9h3v2.95h-3zM39 5.9h3v2.95h-3zM42 5.9h3v2.95h-3zM45 5.9h3v2.95h-3zM72 8.85h3v2.95h-3z"/><path opacity="0.33" d="M36 2.95h3v2.95h-3zM57 5.9h3v2.95h-3zM63 5.9h3v2.95h-3zM3 8.85h3v2.95h-3zM30 8.85h3v2.95h-3zM36 8.85h3v2.95h-3z"/><path opacity="0.44" d="M54 2.95h3v2.95h-3zM75 2.95h3v2.95h-3zM54 5.9h3v2.95h-3zM33 8.85h3v2.95h-3z"/><path opacity="0.56" d="M3 2.95h3v2.95h-3zM33 2.95h3v2.95h-3zM12 5.9h3v2.95h-3zM30 5.9h3v2.95h-3zM36 5.9h3v2.95h-3zM57 8.85h3v2.95h-3z"/><path opacity="0.67" d="M51 0h3v2.95h-3zM51 2.95h3v2.95h-3zM0 5.9h3v2.95h-3zM51 5.9h3v2.95h-3zM60 5.9h3v2.95h-3zM66 8.85h3v2.95h-3z"/><path opacity="0.78" d="M6 0h3v2.95h-3zM6 2.95h3v2.95h-3zM6 5.9h3v2.95h-3zM9 5.9h3v2.95h-3zM33 5.9h3v2.95h-3zM51 8.85h3v2.95h-3zM63 8.85h3v2.95h-3z"/><path opacity="0.89" d="M39 2.95h3v2.95h-3zM42 2.95h3v2.95h-3zM45 2.95h3v2.95h-3zM24 5.9h3v2.95h-3zM0 8.85h3v2.95h-3zM6 8.85h3v2.95h-3zM9 8.85h3v2.95h-3zM12 8.85h3v2.95h-3zM39 8.85h3v2.95h-3zM42 8.85h3v2.95h-3zM45 8.85h3v2.95h-3zM54 8.85h3v2.95h-3zM60 8.85h3v2.95h-3z"/><path opacity="1.00" d="M21 5.9h3v2.95h-3zM72 5.9h3v2.95h-3z"/></svg>
<svg style="left:35.2px;top:499.4px" width="66.0" height="8.9" fill="#000" shape-rendering="crispEdges"><path opacity="0.44" d="M33 0h3v2.95h-3zM39 0h3v2.95h-3zM30 2.95h3v2.95h-3zM36 2.95h3v2.95h-3zM33 5.9h3v2.95h-3zM39 5.9h3v2.95h-3z"/><path opacity="0.89" d="M57 0h3v2.95h-3zM63 0h3v2.95h-3zM57 5.9h3v2.95h-3zM63 5.9h3v2.95h-3z"/><path opacity="1.00" d="M24 0h3v2.95h-3zM30 0h3v2.95h-3zM36 0h3v2.95h-3zM42 0h3v2.95h-3zM45 0h3v2.95h-3zM51 0h3v2.95h-3zM24 2.95h3v2.95h-3zM33 2.95h3v2.95h-3zM39 2.95h3v2.95h-3zM42 2.95h3v2.95h-3zM45 2.95h3v2.95h-3zM51 2.95h3v2.95h-3zM0 5.9h3v2.95h-3zM6 5.9h3v2.95h-3zM15 5.9h3v2.95h-3zM24 5.9h3v2.95h-3zM30 5.9h3v2.95h-3zM36 5.9h3v2.95h-3zM42 5.9h3v2.95h-3zM45 5.9h3v2.95h-3zM51 5.9h3v2.95h-3z"/></svg>
<svg style="left:35.2px;top:517.2px" width="93.0" height="8.9" fill="#000" shape-rendering="crispEdges"><path opacity="0.22" d="M12 0h3v2.95h-3zM24 0h3v2.95h-3zM0 2.95h3v2.95h-3zM90 2.95h3v2.95h-3zM45 5.9h3v2.95h-3z"/><path opacity="0.33" d="M6 0h3v2.95h-3zM45 2.95h3v2.95h-3zM54 2.95h3v2.95h-3z"/><path opacity="0.44" d="M3 0h3v2.95h-3zM63 0h3v2.95h-3zM3 5.9h3v2.95h-3zM42 5.9h3v2.95h-3z"/><path opacity="0.56" d="M18 2.95h3v2.95h-3zM54 5.9h3v2.95h-3z"/><path opacity="0.67" d="M24 2.95h3v2.95h-3zM42 2.95h3v2.95h-3z"/><path opacity="0.78" d="M57 0h3v2.95h-3zM81 0h3v2.95h-3zM81 2.95h3v2.95h-3zM24 5.9h3v2.95h-3zM81 5.9h3v2.95h-3z"/><path opacity="0.89" d="M42 0h3v2.95h-3zM54 0h3v2.95h-3zM6 2.95h3v2.95h-3zM9 2.95h3v2.95h-3zM21 2.95h3v2.95h-3zM27 2.95h3v2.95h-3z"/><path opacity="1.00" d="M0 0h3v2.95h-3zM18 0h3v2.95h-3zM21 0h3v2.95h-3zM75 0h3v2.95h-3zM78 0h3v2.95h-3zM84 0h3v2.95h-3zM3 2.95h3v2.95h-3zM12 2.95h3v2.95h-3zM30 2.95h3v2.95h-3zM48 2.95h3v2.95h-3zM51 2.95h3v2.95h-3zM69 2.95h3v2.95h-3zM75 2.95h3v2.95h-3zM78 2.95h3v2.95h-3zM84 2.95h3v2.95h-3zM0 5.9h3v2.95h-3zM6 5.9h3v2.95h-3zM9 5.9h3v2.95h-3zM12 5.9h3v2.95h-3zM18 5.9h3v2.95h-3zM21 5.9h3v2.95h-3zM27 5.9h3v2.95h-3zM30 5.9h3v2.95h-3zM36 5.9h3v2.95h-3zM75 5.9h3v2.95h-3zM78 5.9h3v2.95h-3zM84 5.9h3v2.95h-3zM90 5.9h3v2.95h-3z"/></svg>
<svg style="left:35.2px;top:535.1px" width="120.0" height="8.9" fill="#45649b" shape-rendering="crispEdges"><path opacity="0.33" d="M114 0h3v2.95h-3zM24 2.95h3v2.95h-3zM27 2.95h3v2.95h-3zM48 2.95h3v2.95h-3zM84 2.95h3v2.95h-3zM105 2.95h3v2.95h-3zM57 5.9h3v2.95h-3zM114 5.9h3v2.95h-3z"/><path opacity="0.44" d="M21 0h3v2.95h-3zM87 0h3v2.95h-3zM21 2.95h3v2.95h-3zM42 2.95h3v2.95h-3zM111 2.95h3v2.95h-3zM9 5.9h3v2.95h-3zM60 5.9h3v2.95h-3z"/><path opacity="0.56" d="M12 0h3v2.95h-3zM24 0h3v2.95h-3zM117 0h3v2.95h-3zM0 2.95h3v2.95h-3zM15 2.95h3v2.95h-3zM66 2.95h3v2.95h-3zM21 5.9h3v2.95h-3z"/><path opacity="0.67" d="M99 0h3v2.95h-3zM12 2.95h3v2.95h-3zM54 2.95h3v2.95h-3zM87 2.95h3v2.95h-3zM99 2.95h3v2.95h-3zM114 2.95h3v2.95h-3zM117 2.95h3v2.95h-3zM78 5.9h3v2.95h-3zM99 5.9h3v2.95h-3z"/><path opacity="0.78" d="M15 0h3v2.95h-3zM24 5.9h3v2.95h-3zM81 5.9h3v2.95h-3zM111 5.9h3v2.95h-3z"/><path opacity="0.89" d="M3 0h3v2.95h-3zM90 0h3v2.95h-3zM3 2.95h3v2.95h-3zM12 5.9h3v2.95h-3zM42 5.9h3v2.95h-3zM48 5.9h3v2.95h-3zM72 5.9h3v2.95h-3zM105 5.9h3v2.95h-3zM117 5.9h3v2.95h-3z"/><path opacity="1.00" d="M3 5.9h3v2.95h-3zM36 5.9h3v2.95h-3zM66 5.9h3v2.95h-3z"/></svg>
<svg style="left:38.2px;top:552.8px" width="78.0" height="11.8" fill="#45649b" shape-rendering="crispEdges"><path opacity="0.22" d="M0 2.95h3v2.95h-3zM3 5.9h3v2.95h-3zM39 5.9h3v2.95h-3zM42 5.9h3v2.95h-3zM45 5.9h3v2.95h-3zM72 8.85h3v2.95h-3z"/><path opacity="0.33" d="M36 2.95h3v2.95h-3zM57 5.9h3v2.95h-3zM63 5.9h3v2.95h-3zM3 8.85h3v2.95h-3zM30 8.85h3v2.95h-3zM36 8.85h3v2.95h-3z"/><path opacity="0.44" d="M54 2.95h3v2.95h-3zM75 2.95h3v2.95h-3zM54 5.9h3v2.95h-3zM33 8.85h3v2.95h-3z"/><path opacity="0.56" d="M3 2.95h3v2.95h-3zM33 2.95h3v2.95h-3zM12 5.9h3v2.95h-3zM30 5.9h3v2.95h-3zM36 5.9h3v2.95h-3zM57 8.85h3v2.95h-3z"/><path opacity="0.67" d="M51 0h3v2.95h-3zM51 2.95h3v2.95h-3zM0 5.9h3v2.95h-3zM51 5.9h3v2.95h-3zM60 5.9h3v2.95h-3zM66 8.85h3v2.95h-3z"/><path opacity="0.78" d="M6 0h3v2.95h-3zM6 2.95h3v2.95h-3zM6 5.9h3v2.95h-3zM9 5.9h3v2.95h-3zM33 5.9h3v2.95h-3zM51 8.85h3v2.95h-3zM63 8.85h3v2.95h-3z"/><path opacity="0.89" d="M39 2.95h3v2.95h-3zM42 2.95h3v2.95h-3zM45 2.95h3v2.95h-3zM24 5.9h3v2.95h-3zM0 8.85h3v2.95h-3zM6 8.85h3v2.95h-3zM9 8.85h3v2.95h-3zM12 8.85h3v2.95h-3zM39 8.85h3v2.95h-3zM42 8.85h3v2.95h-3zM45 8.85h3v2.95h-3zM54 8.85h3v2.95h-3zM60 8.85h3v2.95h-3z"/><path opacity="1.00" d="M21 5.9h3v2.95h-3zM72 5.9h3v2.95h-3z"/></svg>
<svg style="left:459.4px;top:327.2px" width="45.0" height="8.9" fill="#000" shape-rendering="crispEdges"><path opacity="0.11" d="M39 2.95h3v2.95h-3z"/><path opacity="0.22" d="M24 0h3v2.95h-3zM24 2.95h3v2.95h-3zM30 2.95h3v2.95h-3z"/><path opacity="0.44" d="M0 2.95h3v2.95h-3z"/><path opacity="0.56" d="M6 2.95h3v2.95h-3z"/><path opacity="0.67" d="M6 0h3v2.95h-3zM12 0h3v2.95h-3zM18 0h3v2.95h-3zM27 0h3v2.95h-3z"/><path opacity="0.78" d="M33 0h3v2.95h-3zM42 2.95h3v2.95h-3z"/><path opacity="0.89" d="M3 0h3v2.95h-3z"/><path opacity="1.00" d="M42 0h3v2.95h-3zM33 5.9h3v2.95h-3z"/></svg>
<svg style="left:459.4px;top:342.1px" width="45.0" height="5.9" fill="#000" shape-rendering="crispEdges"><path opacity="0.44" d="M6 0h3v2.95h-3zM18 2.95h3v2.95h-3zM21 2.95h3v2.95h-3z"/><path opacity="0.56" d="M0 0h3v2.95h-3zM3 0h3v2.95h-3zM9 0h3v2.95h-3zM15 0h3v2.95h-3z"/><path opacity="0.67" d="M12 0h3v2.95h-3zM27 0h3v2.95h-3zM30 0h3v2.95h-3zM3 2.95h3v2.95h-3zM12 2.95h3v2.95h-3z"/><path opacity="0.78" d="M33 0h3v2.95h-3z"/><path opacity="0.89" d="M33 2.95h3v2.95h-3z"/><path opacity="1.00" d="M36 0h3v2.95h-3zM39 0h3v2.95h-3zM6 2.95h3v2.95h-3zM9 2.95h3v2.95h-3zM27 2.95h3v2.95h-3zM30 2.95h3v2.95h-3zM36 2.95h3v2.95h-3zM39 2.95h3v2.95h-3z"/></svg>
<svg style="left:462.0px;top:431.1px" width="42.0" height="8.9" fill="#000" shape-rendering="crispEdges"><path opacity="0.11" d="M0 5.9h3v2.95h-3zM9 5.9h3v2.95h-3zM12 5.9h3v2.95h-3z"/><path opacity="0.22" d="M24 0h3v2.95h-3zM24 2.95h3v2.95h-3z"/><path opacity="0.33" d="M0 2.95h3v2.95h-3zM15 2.95h3v2.95h-3zM36 2.95h3v2.95h-3zM36 5.9h3v2.95h-3z"/><path opacity="0.44" d="M3 0h3v2.95h-3z"/><path opacity="0.56" d="M3 2.95h3v2.95h-3zM3 5.9h3v2.95h-3z"/><path opacity="0.67" d="M15 5.9h3v2.95h-3zM21 5.9h3v2.95h-3z"/><path opacity="0.78" d="M18 2.95h3v2.95h-3z"/><path opacity="0.89" d="M39 2.95h3v2.95h-3z"/><path opacity="1.00" d="M6 5.9h3v2.95h-3z"/></svg>
<svg style="left:462.0px;top:529.1px" width="42.0" height="8.9" fill="#000" shape-rendering="crispEdges"><path opacity="0.11" d="M0 5.9h3v2.95h-3zM9 5.9h3v2.95h-3z"/><path opacity="0.22" d="M33 0h3v2.95h-3zM33 2.95h3v2.95h-3zM33 5.9h3v2.95h-3z"/><path opacity="0.33" d="M36 0h3v2.95h-3zM0 2.95h3v2.95h-3z"/><path opacity="0.44" d="M3 0h3v2.95h-3zM18 2.95h3v2.95h-3z"/><path opacity="0.56" d="M3 2.95h3v2.95h-3zM3 5.9h3v2.95h-3zM15 5.9h3v2.95h-3zM39 5.9h3v2.95h-3z"/><path opacity="0.67" d="M12 2.95h3v2.95h-3z"/><path opacity="0.78" d="M27 2.95h3v2.95h-3zM36 2.95h3v2.95h-3zM36 5.9h3v2.95h-3z"/><path opacity="0.89" d="M30 5.9h3v2.95h-3z"/><path opacity="1.00" d="M39 2.95h3v2.95h-3zM6 5.9h3v2.95h-3zM21 5.9h3v2.95h-3z"/></svg>
<svg style="left:226.0px;top:230.6px" width="68" height="16" viewBox="0 0 68 16"><g transform="translate(7.600 8.300) rotate(-30)" fill="none" stroke="#1058c2" stroke-width="1.900"><rect x="-4.900" y="-4.900" width="9.800" height="9.800" rx="3.600"/></g><path d="M9.600 .6L14.200 1.900 11.400 5.600ZM.2 5.200L4 3.600 3.200 7.600ZM3.200 15.400L5 11.800 7.600 14.300Z" fill="#1058c2"/><text x="15.300" y="12.050" font-family="Liberation Sans,sans-serif" font-size="14.600" letter-spacing=".12" fill="#1058c2" fill-opacity=".92">digicert</text><text x="63.700" y="4.900" font-family="Liberation Sans,sans-serif" font-size="4.200" fill="#5d86c4">®</text></svg>
<div class="t" style="left:226.2px;top:251.2px;color:#333;font-size:9.9px;letter-spacing:-.1px">-</div>
<div class="t" style="left:340.6px;top:239.7px;color:#333">待申请</div>
<svg style="left:379.0px;top:239.8px" width="13.600" height="13.600" viewBox="0 0 13 13"><circle cx="6.500" cy="6.500" r="6.500" fill="#0b50d0"/><rect x="5.650" y="2.700" width="1.700" height="5" rx=".6" fill="#fff"/><circle cx="6.500" cy="9.700" r="1" fill="#fff"/></svg>
<svg style="left:226.0px;top:319.2px" width="68" height="16" viewBox="0 0 68 16"><g transform="translate(7.600 8.300) rotate(-30)" fill="none" stroke="#1058c2" stroke-width="1.900"><rect x="-4.900" y="-4.900" width="9.800" height="9.800" rx="3.600"/></g><path d="M9.600 .6L14.200 1.900 11.400 5.600ZM.2 5.200L4 3.600 3.200 7.600ZM3.200 15.400L5 11.800 7.600 14.300Z" fill="#1058c2"/><text x="15.300" y="12.050" font-family="Liberation Sans,sans-serif" font-size="14.600" letter-spacing=".12" fill="#1058c2" fill-opacity=".92">digicert</text><text x="63.700" y="4.900" font-family="Liberation Sans,sans-serif" font-size="4.200" fill="#5d86c4">®</text></svg>
<div class="t" style="left:226.2px;top:339.8px;color:#333;font-size:9.9px;letter-spacing:-.1px">RSA</div>
<div class="t" style="left:340.6px;top:328.3px;color:#333">已签发</div>
<svg style="left:379.0px;top:328.4px" width="13.600" height="13.600" viewBox="0 0 13 13"><circle cx="6.500" cy="6.500" r="6.500" fill="#0b50d0"/><rect x="5.650" y="2.700" width="1.700" height="5" rx=".6" fill="#fff"/><circle cx="6.500" cy="9.700" r="1" fill="#fff"/></svg>
<svg style="left:226.0px;top:417.3px" width="68" height="16" viewBox="0 0 68 16"><g transform="translate(7.600 8.300) rotate(-30)" fill="none" stroke="#1058c2" stroke-width="1.900"><rect x="-4.900" y="-4.900" width="9.800" height="9.800" rx="3.600"/></g><path d="M9.600 .6L14.200 1.900 11.400 5.600ZM.2 5.200L4 3.600 3.200 7.600ZM3.200 15.400L5 11.800 7.600 14.300Z" fill="#1058c2"/><text x="15.300" y="12.050" font-family="Liberation Sans,sans-serif" font-size="14.600" letter-spacing=".12" fill="#1058c2" fill-opacity=".92">digicert</text><text x="63.700" y="4.900" font-family="Liberation Sans,sans-serif" font-size="4.200" fill="#5d86c4">®</text></svg>
<div class="t" style="left:226.2px;top:437.9px;color:#333;font-size:9.9px;letter-spacing:-.1px">RSA</div>
<div class="t" style="left:340.6px;top:426.4px;color:#333">已签发</div>
<svg style="left:379.0px;top:426.5px" width="13.600" height="13.600" viewBox="0 0 13 13"><circle cx="6.500" cy="6.500" r="6.500" fill="#0b50d0"/><rect x="5.650" y="2.700" width="1.700" height="5" rx=".6" fill="#fff"/><circle cx="6.500" cy="9.700" r="1" fill="#fff"/></svg>
<svg style="left:226.0px;top:515.5px" width="68" height="16" viewBox="0 0 68 16"><g transform="translate(7.600 8.300) rotate(-30)" fill="none" stroke="#1058c2" stroke-width="1.900"><rect x="-4.900" y="-4.900" width="9.800" height="9.800" rx="3.600"/></g><path d="M9.600 .6L14.200 1.900 11.400 5.600ZM.2 5.200L4 3.600 3.200 7.600ZM3.200 15.400L5 11.800 7.600 14.300Z" fill="#1058c2"/><text x="15.300" y="12.050" font-family="Liberation Sans,sans-serif" font-size="14.600" letter-spacing=".12" fill="#1058c2" fill-opacity=".92">digicert</text><text x="63.700" y="4.900" font-family="Liberation Sans,sans-serif" font-size="4.200" fill="#5d86c4">®</text></svg>
<div class="t" style="left:226.2px;top:536.1px;color:#333;font-size:9.9px;letter-spacing:-.1px">RSA</div>
<div class="t" style="left:340.6px;top:524.6px;color:#333">已签发</div>
<svg style="left:379.0px;top:524.7px" width="13.600" height="13.600" viewBox="0 0 13 13"><circle cx="6.500" cy="6.500" r="6.500" fill="#0b50d0"/><rect x="5.650" y="2.700" width="1.700" height="5" rx=".6" fill="#fff"/><circle cx="6.500" cy="9.700" r="1" fill="#fff"/></svg>
<div class="t" style="left:460.4px;top:241.1px;color:#333">--</div>
<div class="t" style="left:34.4px;top:595.2px;color:#333;letter-spacing:.5px">cert-8006916</div>
<div class="a" style="left:20.7px;top:611.7px;width:900px;height:60px;background:#fff;box-shadow:0 -1.5px 5px rgba(0,0,0,.13)"></div>
</div>
<div class="a" id="overlay"></div>
<div class="a" id="ask" style="left:28.8px;top:284.6px;width:119px;height:25.2px;border-radius:12.600px;background:#19498e;z-index:4"><svg style="left:11.400px;top:7.100px" width="10.800" height="11.600" viewBox="0 0 10.800 11.600" fill="#9cacc9"><path d="M.3 .5L10.200 3.500Q10.700 3.800 10.300 4.300L8.600 6.700 9.800 6.900 6.900 11.300 7.300 8.600 5.900 8.500 6.800 7.100Q3.500 7 2.500 5.300L5.600 5.900Q2.300 4.700 1.500 3.100L5 4Q1.300 2.400 .3 .5Z"/></svg><div class="t" style="left:27.600px;top:5.600px;color:#9cacc9;letter-spacing:.35px">有问题? 找专家!</div></div>
<div class="a" style="left:176.6px;top:313.4px;width:13.6px;height:28.200px;background:#919191;border:.85px solid #b3b3b3;border-left:none;border-radius:0 1.700px 1.700px 0;z-index:4"><svg style="left:3.600px;top:8.800px" width="5.400" height="9.600" viewBox="0 0 5.400 9.600" fill="none" stroke="#c4c4c4" stroke-width=".9"><path d="M4.800 .5L.7 4.800 4.800 9.100"/></svg></div>
<div class="a" id="drawer">
<div class="t" id="dtitle" style="left:20.5px;top:14.5px;height:22px;line-height:22px;font-size:15.1px;font-weight:400;color:#262626">证书下载</div>
<svg style="left:510.7px;top:20.300px" width="9.600" height="9.600" viewBox="0 0 9.600 9.600" stroke="#3a3a3a" stroke-width="1" fill="none"><path d="M.5 .5L9.100 9.100M9.100 .5L.5 9.100"/></svg>
<div class="a" style="left:0;top:50.2px;width:100%;height:.85px;background:#e3e4e6"></div>
<div class="a" style="left:19.9px;top:64.9px;width:502.7px;height:34.5px;background:#edf1f9;border-radius:1.700px"></div>
<svg style="left:33.4px;top:76.500px" width="12" height="12" viewBox="0 0 12 12"><circle cx="6" cy="6" r="6" fill="#0b4cc8"/><circle cx="6" cy="3.200" r=".95" fill="#fff"/><rect x="5.150" y="4.900" width="1.700" height="4.600" fill="#fff"/></svg>
<div class="t" id="info" style="left:50.8px;top:75.5px;color:#333;letter-spacing:-.11px">如果您需要技术专家提供1对1在线技术支持，进行配置、部署SSL证书，可点击购买“<span class="lnk">部署服务</span>”。</div>
<div class="t" id="hint" style="left:20.5px;top:111.9px;color:#333">请根据您的服务器类型选择证书下载:</div>
<div class="a" style="left:19.9px;top:132.2px;width:502.7px;height:35.4px;background:#edf1f9"></div>
<div class="t" style="left:34px;top:143.2px;color:#333">服务器类型</div>
<div class="t" style="left:488.1px;top:143.2px;color:#333">操作</div>
<div class="a" style="left:19.9px;top:203.68px;width:502.7px;height:.85px;background:#e4e5e7"></div>
<div class="t" style="left:34px;top:179.2px;color:#333;letter-spacing:.15px">Tomcat</div>
<div class="t lnk" style="left:447.6px;top:179.2px">帮助</div>
<div class="a" style="left:474.2px;top:180.9px;width:.85px;height:10.4px;background:#dcdcdc"></div>
<div class="t lnk" style="left:485.8px;top:179.2px">下载</div>
<div class="a" style="left:19.9px;top:240.21px;width:502.7px;height:.85px;background:#e4e5e7"></div>
<div class="t" style="left:34px;top:215.7px;color:#333;letter-spacing:.15px">Apache</div>
<div class="t lnk" style="left:447.6px;top:215.7px">帮助</div>
<div class="a" style="left:474.2px;top:217.4px;width:.85px;height:10.4px;background:#dcdcdc"></div>
<div class="t lnk" style="left:485.8px;top:215.7px">下载</div>
<div class="a" style="left:19.9px;top:276.74px;width:502.7px;height:.85px;background:#e4e5e7"></div>
<div class="t" style="left:34px;top:252.3px;color:#333;letter-spacing:.15px">Nginx</div>
<div class="t lnk" style="left:447.6px;top:252.3px">帮助</div>
<div class="a" style="left:474.2px;top:254.0px;width:.85px;height:10.4px;background:#dcdcdc"></div>
<div class="t lnk" style="left:485.8px;top:252.3px">下载</div>
<div class="a" style="left:19.9px;top:313.27px;width:502.7px;height:.85px;background:#e4e5e7"></div>
<div class="t" style="left:34px;top:288.8px;color:#333;letter-spacing:.15px">IIS</div>
<div class="t lnk" style="left:447.6px;top:288.8px">帮助</div>
<div class="a" style="left:474.2px;top:290.5px;width:.85px;height:10.4px;background:#dcdcdc"></div>
<div class="t lnk" style="left:485.8px;top:288.8px">下载</div>
<div class="a" style="left:19.9px;top:349.80px;width:502.7px;height:.85px;background:#e4e5e7"></div>
<div class="t" style="left:34px;top:325.3px;color:#333;letter-spacing:.15px">JKS</div>
<div class="t lnk" style="left:447.6px;top:325.3px">帮助</div>
<div class="a" style="left:474.2px;top:327.0px;width:.85px;height:10.4px;background:#dcdcdc"></div>
<div class="t lnk" style="left:485.8px;top:325.3px">下载</div>
<div class="a" style="left:19.9px;top:386.33px;width:502.7px;height:.85px;background:#e4e5e7"></div>
<div class="t" style="left:34px;top:361.9px;color:#333;letter-spacing:.15px">其他</div>
<div class="t lnk" style="left:485.8px;top:361.9px">下载</div>
<div class="a" style="left:19.9px;top:422.86px;width:502.7px;height:.85px;background:#e4e5e7"></div>
<div class="t" style="left:34px;top:398.4px;color:#333;letter-spacing:.15px">根证书下载</div>
<div class="t lnk" style="left:489.3px;top:398.4px">下载</div>
</div>
<div class="a" style="left:1182.4px;top:375.5px;width:34px;height:34px;border-radius:50%;background:#fff;box-shadow:0 1.500px 7px rgba(0,0,0,.16);z-index:6"></div>
<svg style="left:1191.2px;top:384.4px;z-index:7" width="14.400" height="15.600" viewBox="0 0 10.800 11.600" fill="#3c3c3c"><path d="M.3 .5L10.200 3.500Q10.700 3.800 10.300 4.300L8.600 6.700 9.800 6.900 6.900 11.300 7.300 8.600 5.900 8.500 6.800 7.100Q3.500 7 2.500 5.300L5.600 5.900Q2.300 4.700 1.500 3.100L5 4Q1.300 2.400 .3 .5Z"/></svg>
<div class="a" style="left:1201.3px;top:372.8px;width:21.4px;height:10px;background:#cf1f27;color:#fff;font-size:7.500px;font-weight:700;line-height:10.400px;text-align:center;z-index:8;letter-spacing:-.1px">NEW</div>
<div class="a" style="left:1182.4px;top:417.8px;width:34px;height:34px;border-radius:50%;background:#fff;box-shadow:0 1.500px 7px rgba(0,0,0,.16);z-index:6"></div>
<svg style="left:1192.1px;top:427.100px;z-index:7" width="14.600" height="14.600" viewBox="0 0 14.600 14.600" fill="none" stroke="#333" stroke-width="1.100" stroke-linejoin="round"><path d="M3.700 9.600L9.300 2.200 12.300 4.500 6.700 11.900H3.700Z"/><path d="M7.900 4L10.900 6.300" stroke-width=".9"/><path d="M.4 14H14.200"/></svg>
<div class="a" style="left:1182.6px;top:460px;width:33px;height:.85px;background:#d9dde2;z-index:6"></div>
<div class="a" style="left:1182.4px;top:468.7px;width:34px;height:34px;border-radius:50%;background:#fff;box-shadow:0 1.500px 7px rgba(0,0,0,.16);z-index:6"></div>
<svg style="left:1191.7px;top:479.300px;z-index:7" width="15.400" height="14" viewBox="0 0 15.400 14" fill="none" stroke="#333" stroke-width="1.100" stroke-linejoin="round"><path d="M.6 .6H14.800V9.800H10.300L7.600 12.700V9.800H.6Z"/><circle cx="4.500" cy="5.300" r=".55" fill="#333"/><circle cx="7.700" cy="5.300" r=".55" fill="#333"/><circle cx="10.900" cy="5.300" r=".55" fill="#333"/></svg>
<div class="a" style="left:1182.4px;top:511.6px;width:34px;height:34px;border-radius:50%;background:#0b47c4;box-shadow:0 1.500px 7px rgba(0,0,0,.16);z-index:6"></div>
<svg style="left:1191.6px;top:520.800px;z-index:7" width="15.600" height="15.600" viewBox="0 0 15.600 15.600" fill="none" stroke="#fff" stroke-width="1.100"><rect x=".9" y="2.100" width="5.200" height="5.200"/><rect x=".9" y="9.500" width="5.200" height="5.200"/><rect x="8.300" y="9.500" width="5.200" height="5.200"/><path d="M10.900 .9L14.600 4.600 10.900 8.300 7.200 4.600Z"/></svg>
</div>
<div id="ring"></div>
</div>
</body>
</html>
